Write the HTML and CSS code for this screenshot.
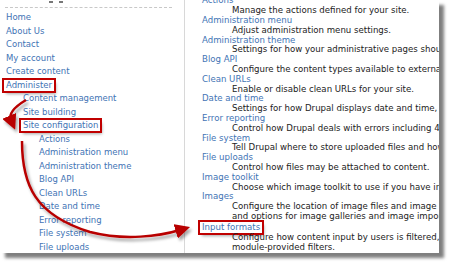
FILE: index.html
```html
<!DOCTYPE html>
<html lang="en">
<head>
  <meta charset="UTF-8">
  <title>Site configuration</title>
  <link rel="stylesheet" href="styles.css">
</head>
<body>

  <div class="frame">
    <!-- Left navigation -->
    <div class="sidebar">
      <div class="sidebar-top">
        <span class="tiny-icon"></span>
        <span class="tiny-icon"></span>
      </div>
      <ul class="nav">
        <li><a href="#">Home</a></li>
        <li><a href="#">About Us</a></li>
        <li><a href="#">Contact</a></li>
        <li><a href="#">My account</a></li>
        <li><a href="#">Create content</a></li>
        <li><a href="#" class="mark">Administer</a>
          <ul>
            <li><a href="#">Content management</a></li>
            <li><a href="#">Site building</a></li>
            <li><a href="#" class="mark">Site configuration</a>
              <ul>
                <li><a href="#">Actions</a></li>
                <li><a href="#">Administration menu</a></li>
                <li><a href="#">Administration theme</a></li>
                <li><a href="#">Blog API</a></li>
                <li><a href="#">Clean URLs</a></li>
                <li><a href="#">Date and time</a></li>
                <li><a href="#">Error reporting</a></li>
                <li><a href="#">File system</a></li>
                <li><a href="#">File uploads</a></li>
              </ul>
            </li>
          </ul>
        </li>
      </ul>
    </div>

    <!-- Admin overview list -->
    <div class="content">
      <dl class="admin-list">
        <dt><a href="#">Actions</a></dt>
        <dd>Manage the actions defined for your site.</dd>
        <dt><a href="#">Administration menu</a></dt>
        <dd>Adjust administration menu settings.</dd>
        <dt><a href="#">Administration theme</a></dt>
        <dd>Settings for how your administrative pages should look.</dd>
        <dt><a href="#">Blog API</a></dt>
        <dd>Configure the content types available to external blogging tools.</dd>
        <dt><a href="#">Clean URLs</a></dt>
        <dd>Enable or disable clean URLs for your site.</dd>
        <dt><a href="#">Date and time</a></dt>
        <dd>Settings for how Drupal displays date and time, as well as the system's default timezone.</dd>
        <dt><a href="#">Error reporting</a></dt>
        <dd>Control how Drupal deals with errors including 403/404 errors as well as PHP error reporting.</dd>
        <dt><a href="#">File system</a></dt>
        <dd>Tell Drupal where to store uploaded files and how they are accessed.</dd>
        <dt><a href="#">File uploads</a></dt>
        <dd>Control how files may be attached to content.</dd>
        <dt><a href="#">Image toolkit</a></dt>
        <dd>Choose which image toolkit to use if you have installed optional toolkits.</dd>
        <dt><a href="#">Images</a></dt>
        <dd>Configure the location of image files and image sizes. Also, if enabled, configure image attachments<br>and options for image galleries and image imports.</dd>
        <dt><a href="#" class="mark">Input formats</a></dt>
        <dd>Configure how content input by users is filtered, including allowed HTML tags. Also allows enabling of<br>module-provided filters.</dd>
      </dl>
    </div>
  </div>

  <!-- Callout arrows -->
  <svg class="arrows" width="454" height="266" viewBox="0 0 454 266">
    <defs>
      <filter id="drop" x="-20%" y="-20%" width="140%" height="140%">
        <feDropShadow dx="2" dy="3" stdDeviation="1.5" flood-color="#000" flood-opacity="0.35"/>
      </filter>
      <marker id="head" viewBox="0 0 10 10" refX="3" refY="5" markerWidth="6" markerHeight="6" orient="auto">
        <path d="M0,0 L10,5 L0,10 Z" fill="#b80000"/>
      </marker>
    </defs>
    <g filter="url(#drop)" fill="none" stroke="#b80000" stroke-width="2.5">
      <path d="M26,100 C16,106 8,113 11,120" marker-end="url(#head)"/>
      <path d="M22,141 C22,185 35,215 90,232 C125,241 160,236 180,230" marker-end="url(#head)"/>
    </g>
  </svg>

</body>
</html>
```

FILE: styles.css
```css
/* Reset default styles */
* {
  margin: 0;
  padding: 0;
  box-sizing: border-box;
}

body {
  background: #fff;
  font-family: "DejaVu Sans", Verdana, sans-serif;
  position: relative;
  width: 454px;
  height: 266px;
  overflow: hidden;
}

a {
  color: #4274b5;
  text-decoration: none;
}

ul {
  list-style: none;
}

/* Screenshot frame */
.frame {
  display: flex;
  width: 439px;
  height: 253px;
  background: #fff;
  box-shadow: 5px 5px 3px rgba(0, 0, 0, 0.5);
  overflow: hidden;
}

/* Left navigation */
.sidebar {
  width: 185px;
  flex-shrink: 0;
  border-right: 1px solid #d8d8d8;
  font-size: 8.5px;
}

.sidebar-top {
  display: flex;
  gap: 6px;
  height: 8px;
  margin: 0 12px 3px 5px;
  padding-left: 44px;
  border-bottom: 1px dashed #c8c8c8;
}

.tiny-icon {
  width: 4px;
  height: 2px;
  margin-top: 1px;
  background: #777;
}

.nav {
  padding-left: 6px;
}

.nav li {
  line-height: 13.5px;
}

.nav ul {
  padding-left: 17px;
}

.nav ul ul {
  padding-left: 16px;
}

/* Highlight box */
.mark {
  display: inline-block;
  line-height: 9px;
  padding: 1px 2px;
  margin: 0 -2px;
  outline: 2px solid #c00000;
  box-shadow: 2px 3px 3px rgba(0, 0, 0, 0.35);
}

/* Admin overview list */
.content {
  flex: 1;
  overflow: hidden;
  padding-left: 17px;
  font-size: 8.6px;
}

.admin-list {
  margin-top: -3.6px;
  white-space: nowrap;
}

.admin-list dt,
.admin-list dd {
  line-height: 9.8px;
}

.admin-list dd {
  padding-left: 30px;
  color: #222;
}

/* Callout arrows */
.arrows {
  position: absolute;
  top: 0;
  left: 0;
  pointer-events: none;
}
```
